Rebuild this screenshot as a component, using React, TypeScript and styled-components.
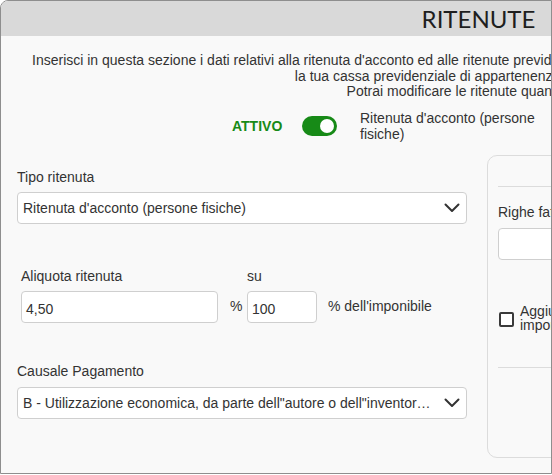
import React from "react";
import styled, { createGlobalStyle } from "styled-components";

const GlobalStyle = createGlobalStyle`
  html, body {
    margin: 0;
    padding: 0;
    background: #ffffff;
  }
  body {
    font-family: "Liberation Sans", Arial, sans-serif;
    color: #333333;
  }
`;

const Frame = styled.div`
  width: 552px;
  height: 474px;
  box-sizing: border-box;
  border: 1px solid #8e8e8e;
  border-top-left-radius: 8px;
  overflow: hidden;
  background: #f9f9f9;
`;

const Dialog = styled.div`
  width: 955px;
  display: flex;
  flex-direction: column;
`;

const Header = styled.div`
  height: 35px;
  background: #d9d9d9;
  display: flex;
  align-items: center;
  justify-content: center;
`;

const Title = styled.h1`
  margin: 0;
  font-family: Lato, "Open Sans", sans-serif;
  font-weight: 400;
  font-size: 24px;
  color: #1e1e1e;
`;

const Intro = styled.div`
  margin-top: 17px;
  font-size: 14px;
  line-height: 15.5px;
  text-align: center;
  color: #333;
`;

const IntroLine = styled.div`
  white-space: nowrap;
`;

const ToggleRow = styled.div`
  display: flex;
  align-items: center;
  padding-left: 231px;
  margin-top: 10px;
`;

const StatusText = styled.span`
  font-size: 14px;
  font-weight: 700;
  color: #178a17;
  width: 70px;
`;

const Switch = styled.div<{ $on: boolean }>`
  width: 35px;
  height: 20px;
  border-radius: 10px;
  background: ${(p) => (p.$on ? "#178a17" : "#bbbbbb")};
  display: flex;
  align-items: center;
  justify-content: ${(p) => (p.$on ? "flex-end" : "flex-start")};
  padding: 0 3px;
  box-sizing: border-box;
`;

const Knob = styled.span`
  width: 14px;
  height: 14px;
  border-radius: 50%;
  background: #ffffff;
`;

const SwitchLabel = styled.span`
  margin-left: 23px;
  width: 200px;
  font-size: 14px;
  line-height: 16px;
  color: #333;
`;

const Body = styled.div`
  display: flex;
  align-items: flex-start;
  gap: 20px;
  padding: 13px 0 0 16px;
`;

const LeftColumn = styled.div`
  width: 450px;
  display: flex;
  flex-direction: column;
  padding-top: 14px;
`;

const Field = styled.div<{ $indent?: number; $mt?: number }>`
  display: flex;
  flex-direction: column;
  padding-left: ${(p) => p.$indent ?? 0}px;
  margin-top: ${(p) => p.$mt ?? 0}px;
`;

const Label = styled.label<{ $mb?: number }>`
  font-size: 14px;
  line-height: 16px;
  color: #333;
  margin-bottom: ${(p) => p.$mb ?? 8}px;
  white-space: nowrap;
`;

const SelectBox = styled.div`
  height: 32px;
  box-sizing: border-box;
  border: 1px solid #cfcfcf;
  border-radius: 4px;
  background: #ffffff;
  display: flex;
  align-items: center;
  padding: 0 6px 0 5px;
  font-size: 14px;
  color: #333;
`;

const SelectText = styled.span`
  flex: 1;
  min-width: 0;
  white-space: nowrap;
  overflow: hidden;
  text-overflow: ellipsis;
  padding-right: 10px;
`;

const RateRow = styled.div`
  display: flex;
  align-items: flex-start;
`;

const RateCol = styled.div<{ $w: number }>`
  display: flex;
  flex-direction: column;
  width: ${(p) => p.$w}px;
`;

const TextInput = styled.div<{ $w?: number }>`
  width: ${(p) => (p.$w ? `${p.$w}px` : "auto")};
  height: 32px;
  box-sizing: border-box;
  border: 1px solid #cfcfcf;
  border-radius: 4px;
  background: #ffffff;
  display: flex;
  align-items: center;
  padding: 5px 4px 0;
  font-size: 14px;
  color: #333;
`;

const Unit = styled.span<{ $ml: number; $w?: number }>`
  margin-left: ${(p) => p.$ml}px;
  width: ${(p) => (p.$w ? `${p.$w}px` : "auto")};
  margin-top: 30px;
  font-size: 14px;
  color: #333;
  white-space: nowrap;
`;

const SideCard = styled.div`
  flex: 1;
  height: 303px;
  box-sizing: border-box;
  border: 1px solid #dcdcdc;
  border-radius: 10px;
  padding: 30px 0 0 10px;
  display: flex;
  flex-direction: column;
`;

const Divider = styled.div`
  height: 1px;
  background: #dcdcdc;
`;

const SideField = styled.div`
  display: flex;
  flex-direction: column;
  margin-top: 17px;
`;

const CheckRow = styled.div`
  display: flex;
  align-items: flex-start;
  margin-top: 44px;
  margin-bottom: 35px;
  padding-left: 1px;
`;

const CheckBox = styled.span`
  width: 15px;
  height: 15px;
  box-sizing: border-box;
  border: 2px solid #3a3a3a;
  border-radius: 2px;
  background: #fff;
  margin-top: 8px;
`;

const CheckLabel = styled.span`
  margin-left: 6px;
  font-size: 14px;
  line-height: 14px;
  color: #333;
  white-space: nowrap;
`;

const Chevron = () => (
  <svg width="16" height="10" viewBox="0 0 16 10">
    <polyline
      points="1.5,1.5 8,8 14.5,1.5"
      fill="none"
      stroke="#333"
      strokeWidth="2"
      strokeLinecap="round"
      strokeLinejoin="round"
    />
  </svg>
);

const App: React.FC = () => {
  return (
    <>
      <GlobalStyle />
      <Frame>
        <Dialog>
          <Header>
            <Title>RITENUTE</Title>
          </Header>

          <Intro>
            <IntroLine>
              Inserisci in questa sezione i dati relativi alla ritenuta d'acconto ed alle ritenute previdenziali
              eventualmente previste per la tua attività, in base alle
            </IntroLine>
            <IntroLine>la tua cassa previdenziale di appartenenza (es. INPS, ecc).</IntroLine>
            <IntroLine>Potrai modificare le ritenute quando vorrai.</IntroLine>
          </Intro>

          <ToggleRow>
            <StatusText>ATTIVO</StatusText>
            <Switch $on>
              <Knob />
            </Switch>
            <SwitchLabel>Ritenuta d'acconto (persone fisiche)</SwitchLabel>
          </ToggleRow>

          <Body>
            <LeftColumn>
              <Field>
                <Label $mb={7}>Tipo ritenuta</Label>
                <SelectBox>
                  <SelectText>Ritenuta d'acconto (persone fisiche)</SelectText>
                  <Chevron />
                </SelectBox>
              </Field>

              <Field $indent={4} $mt={44}>
                <RateRow>
                  <RateCol $w={197}>
                    <Label $mb={7}>Aliquota ritenuta</Label>
                    <TextInput>4,50</TextInput>
                  </RateCol>
                  <Unit $ml={12} $w={17}>%</Unit>
                  <RateCol $w={70}>
                    <Label $mb={7}>su</Label>
                    <TextInput>100</TextInput>
                  </RateCol>
                  <Unit $ml={11}>% dell'imponibile</Unit>
                </RateRow>
              </Field>

              <Field $mt={40}>
                <Label>Causale Pagamento</Label>
                <SelectBox>
                  <SelectText>
                    B - Utilizzazione economica, da parte dell"autore o dell"inventore, di opere dell'ingegno
                  </SelectText>
                  <Chevron />
                </SelectBox>
              </Field>
            </LeftColumn>

            <SideCard>
              <Divider />
              <SideField>
                <Label>Righe fattura su cui applicare la ritenuta</Label>
                <TextInput />
              </SideField>
              <CheckRow>
                <CheckBox />
                <CheckLabel>
                  Aggiungi la ritenuta previdenziale all'
                  <br />
                  importo della fattura
                </CheckLabel>
              </CheckRow>
              <Divider />
            </SideCard>
          </Body>
        </Dialog>
      </Frame>
    </>
  );
};

export default App;
